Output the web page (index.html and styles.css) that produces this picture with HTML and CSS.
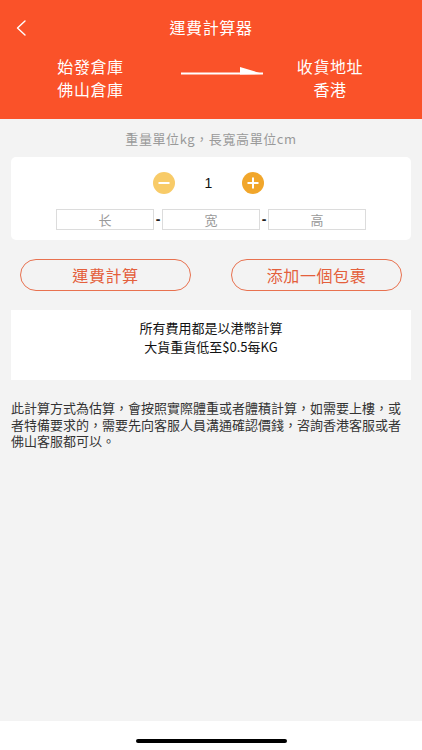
FILE: index.html
```html
<!DOCTYPE html>
<html lang="zh-Hant">
<head>
<meta charset="utf-8">
<title>運費計算器</title>
<link rel="stylesheet" href="styles.css">
</head>
<body>
<div class="screen">
  <header class="header">
    <div class="titlebar">
      <div class="back">
        <svg width="10" height="16" viewBox="0 0 10 16"><polyline points="9,1 1.5,8 9,15" fill="none" stroke="#fff" stroke-width="1.4" stroke-linecap="round" stroke-linejoin="round"/></svg>
      </div>
      <div class="title">運費計算器</div>
      <div></div>
    </div>
    <div class="route">
      <div class="place place-from">
        <div>始發倉庫</div>
        <div>佛山倉庫</div>
      </div>
      <div class="arrow">
        <svg width="84" height="10" viewBox="0 0 84 10"><rect x="0" y="6.5" width="82" height="2" fill="#fff"/><polygon points="59,1 82,8 59,8.5" fill="#fff"/></svg>
      </div>
      <div class="place place-to">
        <div>收貨地址</div>
        <div>香港</div>
      </div>
    </div>
  </header>

  <main class="main">
    <p class="units">重量單位kg，長寬高單位cm</p>

    <section class="card">
      <div class="stepper">
        <span class="circle minus">
          <svg width="22" height="22" viewBox="0 0 22 22"><circle cx="11" cy="11" r="11" fill="#F8CB68"/><rect x="5.5" y="10" width="11" height="2" fill="#fff"/></svg>
        </span>
        <span class="count">1</span>
        <span class="circle plus">
          <svg width="22" height="22" viewBox="0 0 22 22"><circle cx="11" cy="11" r="11" fill="#F1A62B"/><rect x="5.5" y="10" width="11" height="2" fill="#fff"/><rect x="10" y="5.5" width="2" height="11" fill="#fff"/></svg>
        </span>
      </div>
      <div class="dims">
        <div class="dim">长</div>
        <span class="dash">-</span>
        <div class="dim">宽</div>
        <span class="dash">-</span>
        <div class="dim">高</div>
      </div>
    </section>

    <div class="actions">
      <div class="btn">運費計算</div>
      <div class="btn">添加一個包裹</div>
    </div>

    <section class="info">
      <div>所有費用都是以港幣計算</div>
      <div>大貨重貨低至$0.5每KG</div>
    </section>

    <p class="note">此計算方式為估算，會按照實際體重或者體積計算，如需要上樓，或者特備要求的，需要先向客服人員溝通確認價錢，咨詢香港客服或者佛山客服都可以。</p>
  </main>

  <footer class="homebar">
    <span class="indicator"></span>
  </footer>
</div>
</body>
</html>
```

FILE: styles.css
```css
* { box-sizing: border-box; }
html, body { margin: 0; padding: 0; }
body {
  font-family: "Noto Sans CJK TC", "Noto Sans CJK SC", "Noto Sans", sans-serif;
  background: #fff;
}
.screen {
  width: 422px;
  height: 750px;
  display: flex;
  flex-direction: column;
}
.header {
  background: #FA5229;
  color: #fff;
  height: 119px;
  flex: none;
}
.titlebar {
  display: grid;
  grid-template-columns: 1fr auto 1fr;
  align-items: center;
  height: 55px;
}
.back {
  padding-left: 16px;
  display: flex;
  align-items: center;
  padding-top: 1px;
}
.back svg { display: block; }
.title {
  font-size: 16px;
  letter-spacing: 0.6px;
  line-height: 55px;
}
.route {
  display: grid;
  grid-template-columns: 181px 82px 1fr;
  font-size: 16px;
  line-height: 23px;
  letter-spacing: 0.6px;
}
.place { text-align: center; }
.place-to { padding-right: 25px; }
.arrow { padding-top: 11px; }
.arrow svg { display: block; }

.main {
  flex: 1;
  background: #F3F3F3;
  padding: 0 11px;
}
.units {
  margin: 0;
  padding-top: 11px;
  font-size: 13px;
  line-height: 17px;
  letter-spacing: 0.6px;
  color: #9a9a9a;
  text-align: center;
}
.card {
  margin-top: 10px;
  background: #fff;
  border-radius: 5px;
  height: 83px;
  padding-top: 15px;
}
.stepper {
  display: flex;
  justify-content: center;
  align-items: center;
  padding-right: 5px;
  height: 22px;
}
.circle { display: block; width: 22px; height: 22px; }
.circle svg { display: block; }
.count {
  width: 67px;
  text-align: center;
  font-size: 14px;
  font-family: "Liberation Sans", Arial, sans-serif;
  color: #111;
}
.dims {
  margin-top: 15px;
  display: flex;
  justify-content: center;
  align-items: center;
}
.dim {
  width: 98px;
  height: 21px;
  border: 1px solid #dcdcdc;
  font-size: 13px;
  line-height: 19px;
  color: #9a9a9a;
  text-align: center;
}
.dash {
  width: 8px;
  text-align: center;
  font-size: 14px;
  font-weight: bold;
  color: #222;
  font-family: "Liberation Sans", Arial, sans-serif;
  line-height: 19px;
}
.actions {
  margin-top: 19px;
  display: flex;
  justify-content: center;
  gap: 40px;
}
.btn {
  width: 171px;
  height: 32px;
  border: 1px solid #E8714F;
  border-radius: 16px;
  color: #E4603C;
  font-size: 16px;
  line-height: 30px;
  text-align: center;
  letter-spacing: 0.6px;
}
.info {
  margin-top: 19px;
  background: #fff;
  height: 70px;
  padding-top: 8px;
  text-align: center;
  font-size: 13px;
  line-height: 19px;
  color: #111;
}
.note {
  margin: 20px 0 0;
  font-size: 13px;
  line-height: 16.5px;
  color: #333;
}
.homebar {
  flex: none;
  height: 29px;
  background: #fff;
  display: flex;
  justify-content: center;
  padding-top: 18px;
}
.indicator {
  display: block;
  width: 151px;
  height: 4px;
  border-radius: 2px;
  background: #000;
}
```
